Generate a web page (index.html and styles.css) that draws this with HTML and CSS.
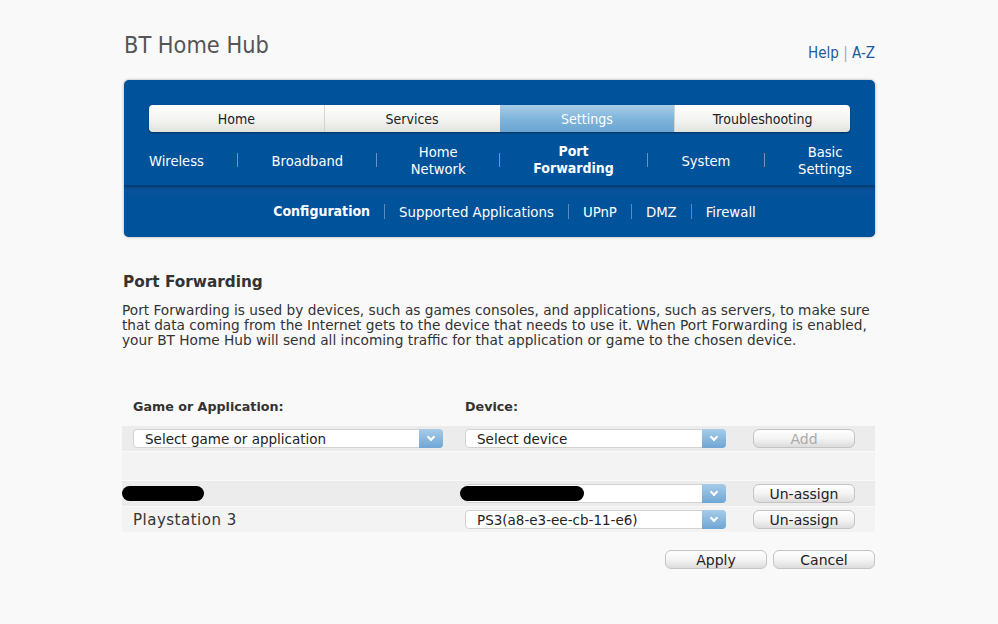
FILE: index.html
```html
<!DOCTYPE html>
<html lang="en">
<head>
    <meta charset="UTF-8">
    <title>BT Home Hub - Port Forwarding</title>
    <link rel="stylesheet" href="styles.css">
</head>
<body>
    <div class="page">
        <!-- header -->
        <header class="top">
            <h1>BT Home Hub</h1>
            <div class="help"><a href="#">Help</a> <span class="bar">|</span> <a href="#">A-Z</a></div>
        </header>

        <!-- main navigation -->
        <div class="nav-panel">
            <ul class="tabs">
                <li>Home</li>
                <li>Services</li>
                <li class="active">Settings</li>
                <li>Troubleshooting</li>
            </ul>
            <ul class="subnav">
                <li>Wireless</li>
                <li class="sep"></li>
                <li>Broadband</li>
                <li class="sep"></li>
                <li>Home<br>Network</li>
                <li class="sep"></li>
                <li class="current">Port<br>Forwarding</li>
                <li class="sep"></li>
                <li>System</li>
                <li class="sep"></li>
                <li>Basic<br>Settings</li>
            </ul>
            <ul class="subsub">
                <li class="current">Configuration</li>
                <li>Supported Applications</li>
                <li>UPnP</li>
                <li>DMZ</li>
                <li>Firewall</li>
            </ul>
        </div>

        <!-- content -->
        <h2>Port Forwarding</h2>
        <p class="intro">Port Forwarding is used by devices, such as games consoles, and applications, such as servers, to make sure that data coming from the Internet gets to the device that needs to use it. When Port Forwarding is enabled, your BT Home Hub will send all incoming traffic for that application or game to the chosen device.</p>

        <div class="pf-table">
            <div class="pf-head">
                <div class="col-app">Game or Application:</div>
                <div class="col-dev">Device:</div>
            </div>
            <div class="pf-row dark">
                <div class="col-app">
                    <div class="select wide"><span>Select game or application</span><i class="arrow"></i></div>
                </div>
                <div class="col-dev">
                    <div class="select"><span>Select device</span><i class="arrow"></i></div>
                </div>
                <div class="col-btn"><button class="btn" disabled>Add</button></div>
            </div>
            <div class="pf-row light empty"></div>
            <div class="pf-row dark">
                <div class="col-app"><span class="redact redact-app"></span></div>
                <div class="col-dev">
                    <div class="select"><span class="redact redact-dev"></span><i class="arrow"></i></div>
                </div>
                <div class="col-btn"><button class="btn">Un-assign</button></div>
            </div>
            <div class="pf-row light">
                <div class="col-app app-name">Playstation 3</div>
                <div class="col-dev">
                    <div class="select"><span>PS3(a8-e3-ee-cb-11-e6)</span><i class="arrow"></i></div>
                </div>
                <div class="col-btn"><button class="btn">Un-assign</button></div>
            </div>
        </div>

        <div class="actions">
            <button class="btn">Apply</button>
            <button class="btn">Cancel</button>
        </div>
    </div>
</body>
</html>
```

FILE: styles.css
```css
    body {
        margin: 0;
        background-color: #f9f9f9;
        font-family: "DejaVu Sans", Verdana, sans-serif;
        color: #333333;
    }

    .page {
        width: 753px;
        margin-left: 122px;
    }

    /* header */
    .top {
        display: flex;
        justify-content: space-between;
        align-items: flex-end;
        height: 80px;
    }

    .top h1 {
        margin: 0 0 20px 2px;
        font-family: "DejaVu Sans Condensed", "DejaVu Sans", sans-serif;
        font-weight: normal;
        font-size: 23.3px;
        color: #555555;
        line-height: 30px;
    }

    .help {
        margin-bottom: 18px;
        font-family: "DejaVu Sans Condensed", "DejaVu Sans", sans-serif;
        font-size: 15px;
        color: #1d5b9b;
    }

    .help a {
        color: #1d5b9b;
        text-decoration: none;
    }

    .help .bar {
        color: #9aaabb;
    }

    /* blue navigation panel */
    .nav-panel {
        margin-left: 2px;
        background-color: #00529b;
        border-radius: 5px;
        box-shadow: 0 0 3px rgba(0, 0, 0, 0.35);
        font-family: "DejaVu Sans Condensed", "DejaVu Sans", sans-serif;
        font-size: 14px;
        overflow: hidden;
    }

    .nav-panel ul {
        list-style: none;
        margin: 0;
        padding: 0;
    }

    .tabs {
        display: flex;
        margin: 25px 25px 0 !important;
        height: 27px;
        border-radius: 4px;
        overflow: hidden;
        box-shadow: 0 1px 2px rgba(0, 0, 0, 0.4);
    }

    .tabs li {
        flex: 1;
        display: flex;
        align-items: center;
        justify-content: center;
        color: #222222;
        background: linear-gradient(#ffffff, #f3f3f1 55%, #e2e2dc);
        border-left: 1px solid #d4d4cc;
    }

    .tabs li:first-child {
        border-left: none;
    }

    .tabs li.active {
        color: #ffffff;
        background: linear-gradient(#a8cde8, #80b5dc 50%, #6aa5d0);
        border-left: none;
    }

    .subnav {
        display: flex;
        justify-content: space-between;
        align-items: center;
        height: 50px;
        padding: 3px 23px 0 25px !important;
        color: #ffffff;
        text-align: center;
        font-size: 14.6px;
        line-height: 17px;
    }

    .subnav .sep {
        width: 1px;
        height: 14px;
        background-color: #6c93be;
    }

    .subnav .current,
    .subsub .current {
        font-weight: bold;
        font-size: 14px;
    }

    .subsub {
        display: flex;
        justify-content: center;
        align-items: center;
        height: 51px;
        padding-left: 30px !important;
        border-top: 1px solid #003f7a;
        background: linear-gradient(#0b5298, #00529b 30%);
        box-shadow: inset 0 3px 3px -2px rgba(0, 0, 0, 0.35);
        color: #ffffff;
        font-size: 14.8px;
    }

    .subsub li {
        padding: 0 14px;
        border-left: 1px solid #5d88b8;
        line-height: 15px;
    }

    .subsub li:first-child {
        border-left: none;
    }

    /* content */
    h2 {
        margin: 36px 0 0 1px;
        font-size: 15.3px;
        font-weight: bold;
        color: #333333;
    }

    .intro {
        margin: 12px 0 0;
        font-size: 13.7px;
        line-height: 15px;
        color: #333333;
    }

    .pf-table {
        margin-top: 50px;
        font-size: 13px;
    }

    .pf-head,
    .pf-row {
        display: flex;
        align-items: center;
    }

    .pf-head {
        align-items: flex-start;
        height: 28px;
        font-size: 12.7px;
        line-height: 18px;
        font-weight: bold;
    }

    .col-app {
        width: 333px;
        padding-left: 11px;
        box-sizing: border-box;
    }

    .col-dev {
        width: 298px;
        padding-left: 10px;
        box-sizing: border-box;
    }

    .app-name {
        font-size: 15px;
        letter-spacing: 0.5px;
        color: #333333;
    }

    .pf-row {
        height: 25px;
        margin-bottom: 1px;
    }

    .pf-row.dark {
        background-color: #ececec;
    }

    .pf-row.light {
        background-color: #f3f3f3;
    }

    .pf-row.empty {
        height: 28px;
    }

    .select {
        position: relative;
        display: flex;
        align-items: center;
        width: 261px;
        height: 19px;
        padding-left: 11px;
        box-sizing: border-box;
        background-color: #ffffff;
        border: 1px solid #d2d2d2;
        border-radius: 4px;
        font-size: 13.5px;
        color: #222222;
    }

    .select.wide {
        width: 310px;
    }

    .select .arrow {
        position: absolute;
        right: -1px;
        top: -1px;
        width: 24px;
        height: 19px;
        border-radius: 0 4px 4px 0;
        background: linear-gradient(#a6cbe8, #6fa6d4);
    }

    .select .arrow::after {
        content: "";
        position: absolute;
        left: 9px;
        top: 5px;
        width: 4px;
        height: 4px;
        border-right: 2px solid #ffffff;
        border-bottom: 2px solid #ffffff;
        transform: rotate(45deg);
    }

    .btn {
        width: 102px;
        height: 19px;
        padding: 0;
        border: 1px solid #c4c4c4;
        border-radius: 6px;
        background: linear-gradient(#ffffff, #f4f4f4 50%, #dcdcdc);
        font-family: "DejaVu Sans", Verdana, sans-serif;
        font-size: 14px;
        line-height: 16px;
        color: #222222;
    }

    .btn:disabled {
        color: #aaaaaa;
    }

    .redact {
        display: block;
        height: 15px;
        background-color: #000000;
        border-radius: 8px;
    }

    .redact-app {
        width: 82px;
        margin-left: -11px;
    }

    .redact-dev {
        width: 124px;
        margin-left: -17px;
    }

    .actions {
        display: flex;
        justify-content: flex-end;
        gap: 6px;
        margin-top: 18px;
    }
```
